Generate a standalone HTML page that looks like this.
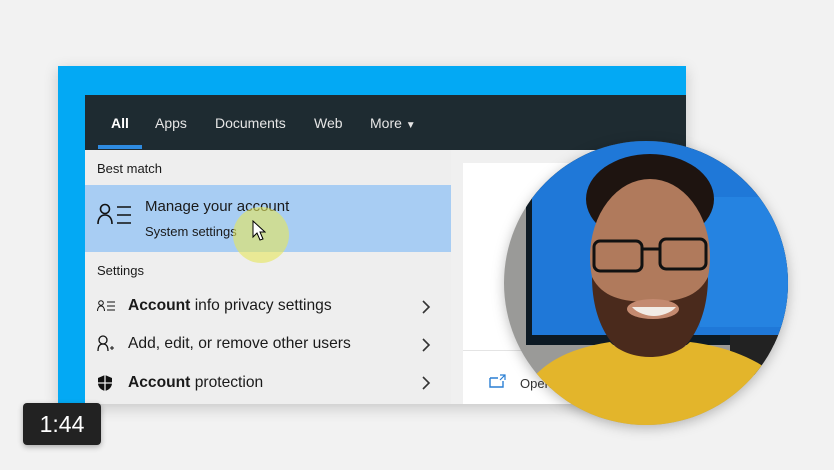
<!DOCTYPE html>
<html><head><meta charset="utf-8"><style>
*{margin:0;padding:0;box-sizing:border-box}
body{width:834px;height:470px;background:#f2f2f2;position:relative;overflow:hidden;font-family:"Liberation Sans",sans-serif}
.blue{position:absolute;left:58px;top:66px;width:628px;height:338px;background:#03a9f4;box-shadow:0 4px 14px rgba(0,0,0,.18)}
.head{position:absolute;left:85px;top:95px;width:601px;height:55px;background:#1e2b31}
.tab{position:absolute;top:20px;color:#e6e6e6;font-size:14px}
.left{position:absolute;left:85px;top:150px;width:366px;height:254px;background:#eeeeee}
.right{position:absolute;left:451px;top:150px;width:235px;height:254px;background:#f0f0f0}
.rw{position:absolute;left:463px;top:163px;width:223px;height:241px;background:#fff}
.hl{position:absolute;left:0;top:35px;width:366px;height:67px;background:#a8cdf3}
.t{position:absolute;color:#1a1a1a}
.chev{position:absolute;left:336px}
.badge{position:absolute;left:23px;top:403px;width:78px;height:42px;background:#222;border-radius:4px;color:#fff;font-size:23px;text-align:center;line-height:42px;box-shadow:0 2px 6px rgba(0,0,0,.3)}
</style></head><body>
<div class="blue"></div>
<div class="head">
 <div class="tab" style="left:26px;font-weight:bold;color:#fff">All</div>
 <div style="position:absolute;left:13px;top:50px;width:44px;height:4px;background:#2e8be0"></div>
 <div class="tab" style="left:70px">Apps</div>
 <div class="tab" style="left:130px">Documents</div>
 <div class="tab" style="left:229px">Web</div>
 <div class="tab" style="left:285px">More <span style="font-size:10px">&#9660;</span></div>
</div>
<div class="right"></div>
<div class="rw"></div>
<div style="position:absolute;left:463px;top:350px;width:223px;height:1px;background:#e4e4e4"></div>
<svg style="position:absolute;left:489px;top:374px" width="18" height="14"><path d="M1 4h8M1 4v9h13V7" stroke="#2a7fd4" stroke-width="1.4" fill="none"/><path d="M11 1h5v5M16 1l-5 5" stroke="#2a7fd4" stroke-width="1.2" fill="none"/></svg>
<div class="t" style="left:520px;top:376px;font-size:13px;color:#333">Open</div>
<div class="left">
 <div class="t" style="left:12px;top:11px;font-size:13px">Best match</div>
 <div class="hl"></div>
 <svg style="position:absolute;left:12px;top:53px" width="36" height="24"><circle cx="8" cy="6" r="4.5" stroke="#111" stroke-width="1.6" fill="none"/><path d="M1 21c0-6 3-9 7-9s7 3 7 9" stroke="#111" stroke-width="1.6" fill="none"/><path d="M20 4h14M20 12h14M20 20h14" stroke="#111" stroke-width="1.6"/></svg>
 <div class="t" style="left:60px;top:48px;font-size:15px">Manage your account</div>
 <div class="t" style="left:60px;top:74px;font-size:13px">System settings</div>
 <div style="position:absolute;left:148px;top:57px;width:56px;height:56px;border-radius:50%;background:rgba(230,230,90,.6)"></div>
 <svg style="position:absolute;left:167px;top:70px" width="14" height="22"><path d="M1 1v16l4-4 3 7 3-1-3-7h5z" fill="#fff" stroke="#000"/></svg>
 <div class="t" style="left:12px;top:113px;font-size:13px">Settings</div>
 <svg style="position:absolute;left:12px;top:150px" width="20" height="12"><circle cx="4" cy="3" r="2.3" stroke="#111" fill="none"/><path d="M0.5 11c0-3 1.5-5 3.5-5s3.5 2 3.5 5" stroke="#111" fill="none"/><path d="M10 2h8M10 6h8M10 10h8" stroke="#111"/></svg>
 <div class="t" style="left:43px;top:147px;font-size:15.6px"><b>Account</b> info privacy settings</div>
 <svg class="chev" style="top:150px" width="10" height="14"><path d="M2 1l6 6-6 6" stroke="#333" stroke-width="1.6" fill="none"/></svg>
 <svg style="position:absolute;left:12px;top:185px" width="18" height="18"><circle cx="6" cy="5" r="4" stroke="#111" stroke-width="1.3" fill="none"/><path d="M1 16c0-5 2-7 5-7s5 2 5 7" stroke="#111" stroke-width="1.3" fill="none"/><path d="M13 13h4M15 11v4" stroke="#111"/></svg>
 <div class="t" style="left:43px;top:185px;font-size:15.6px">Add, edit, or remove other users</div>
 <svg class="chev" style="top:188px" width="10" height="14"><path d="M2 1l6 6-6 6" stroke="#333" stroke-width="1.6" fill="none"/></svg>
 <svg style="position:absolute;left:12px;top:224px" width="16" height="18"><path d="M8 1l7 3v5c0 4-3 7-7 8-4-1-7-4-7-8V4z" fill="#111"/><path d="M8 1v16M1 9h14" stroke="#eee" stroke-width="1.3"/></svg>
 <div class="t" style="left:43px;top:224px;font-size:15.6px"><b>Account</b> protection</div>
 <svg class="chev" style="top:226px" width="10" height="14"><path d="M2 1l6 6-6 6" stroke="#333" stroke-width="1.6" fill="none"/></svg>
</div>
<svg style="position:absolute;left:500px;top:137px;filter:drop-shadow(0 3px 6px rgba(0,0,0,.25))" width="292" height="292">
<defs><clipPath id="c"><circle cx="146" cy="146" r="142"/></clipPath></defs>
<g clip-path="url(#c)">
<rect width="292" height="292" fill="#9a9a98"/>
<rect x="26" y="0" width="270" height="208" fill="#0d1a24"/>
<rect x="32" y="0" width="264" height="198" fill="#1f78d8"/>
<rect x="200" y="60" width="96" height="130" fill="#2a8ae8" opacity=".6"/>
<rect x="230" y="198" width="62" height="40" fill="#222"/>
<ellipse cx="150" cy="62" rx="64" ry="45" fill="#1e1410"/>
<ellipse cx="150" cy="120" rx="60" ry="78" fill="#b07a5c"/>
<path d="M92 140c0 50 25 85 58 85s58-35 58-85c-10 20-30 25-58 25s-48-5-58-25z" fill="#4a2a1c"/>
<ellipse cx="153" cy="172" rx="26" ry="10" fill="#c48a70"/>
<path d="M132 170h44c-5 6-15 9-22 9s-17-3-22-9z" fill="#f2ece6"/>
<rect x="94" y="104" width="48" height="30" rx="6" fill="none" stroke="#111" stroke-width="3"/>
<rect x="160" y="102" width="46" height="30" rx="6" fill="none" stroke="#111" stroke-width="3"/>
<path d="M142 112h18" stroke="#111" stroke-width="3"/>
<path d="M20 260c20-40 60-50 90-55 20 20 60 20 80 0 40 5 80 20 100 50v50H20z" fill="#e3b52b"/>
</g></svg>
<div class="badge">1:44</div>
</body></html>
